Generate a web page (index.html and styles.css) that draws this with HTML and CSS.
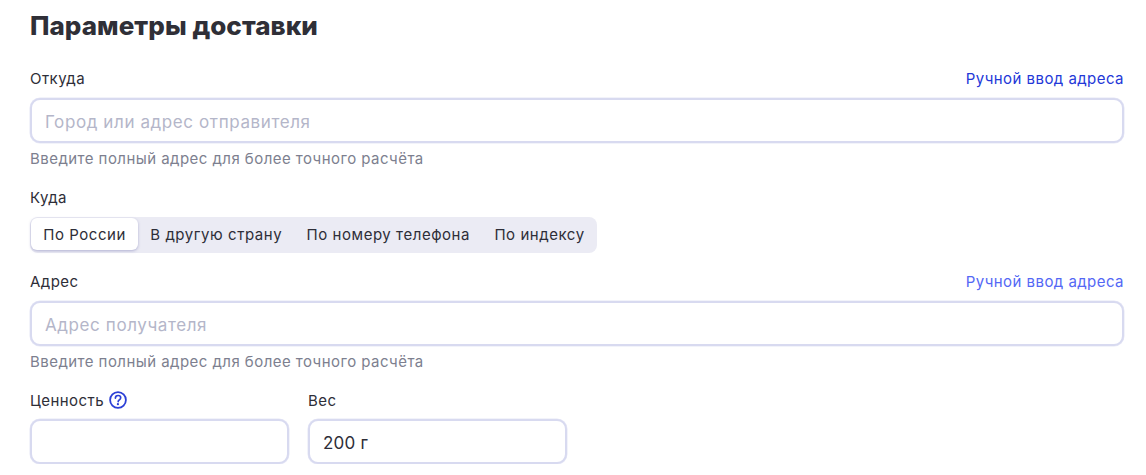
FILE: index.html
```html
<!DOCTYPE html>
<html lang="ru">
<head>
    <meta charset="UTF-8">
    <meta name="viewport" content="width=device-width, initial-scale=1.0">
    <title>Параметры доставки</title>
    <link rel="stylesheet" href="styles.css">
</head>
<body>
    <form class="delivery-form">
        <h1 class="form-title">Параметры доставки</h1>

        <div class="form-group from-group">
            <div class="label-row">
                <label class="form-label">Откуда</label>
                <a href="#" class="manual-link">Ручной ввод адреса</a>
            </div>
            <input type="text" class="form-input" placeholder="Город или адрес отправителя">
            <p class="form-hint">Введите полный адрес для более точного расчёта</p>
        </div>

        <div class="form-group to-group">
            <div class="label-row">
                <label class="form-label">Куда</label>
            </div>
            <div class="tabs">
                <button type="button" class="tab active">По России</button>
                <button type="button" class="tab">В другую страну</button>
                <button type="button" class="tab">По номеру телефона</button>
                <button type="button" class="tab">По индексу</button>
            </div>
        </div>

        <div class="form-group address-group">
            <div class="label-row">
                <label class="form-label">Адрес</label>
                <a href="#" class="manual-link light">Ручной ввод адреса</a>
            </div>
            <input type="text" class="form-input" placeholder="Адрес получателя">
            <p class="form-hint">Введите полный адрес для более точного расчёта</p>
        </div>

        <div class="short-fields">
            <div class="short-field">
                <div class="label-row">
                    <label class="form-label">Ценность
                        <svg class="help-icon" viewBox="0 0 18 18" width="18" height="18" fill="none">
                            <circle cx="9" cy="9" r="7.9" stroke="#2b3fd6" stroke-width="1.8"/>
                            <path d="M6.4 7.1c0-1.6 1.1-2.6 2.7-2.6s2.6 1 2.6 2.3c0 1-.5 1.6-1.4 2.1-.7.5-1.1.9-1.1 1.7" stroke="#2b3fd6" stroke-width="1.7" stroke-linecap="round"/>
                            <circle cx="8.9" cy="13.2" r="1.1" fill="#2b3fd6"/>
                        </svg>
                    </label>
                </div>
                <input type="text" class="form-input">
            </div>
            <div class="short-field">
                <div class="label-row">
                    <label class="form-label">Вес</label>
                </div>
                <input type="text" class="form-input" value="200 г">
            </div>
        </div>
    </form>
</body>
</html>
```

FILE: styles.css
```css
* {
    margin: 0;
    padding: 0;
    box-sizing: border-box;
}

body {
    font-family: Inter, "Noto Sans", Arial, sans-serif;
    background: #fff;
    color: #2e2e38;
    overflow: hidden;
}

.delivery-form {
    width: 1146px;
    padding: 9px 22px 0 30px;
}

.form-title {
    font-size: 26px;
    line-height: 34px;
    font-weight: 800;
    letter-spacing: 0.05px;
    color: #2f2f37;
}

.form-group {
    margin-top: 25px;
}

.to-group {
    margin-top: 20px;
}

.address-group {
    margin-top: 18px;
}

.label-row {
    display: flex;
    justify-content: space-between;
    align-items: center;
    height: 20px;
    margin-bottom: 10px;
}

.form-label {
    display: flex;
    align-items: center;
    gap: 5px;
    font-size: 15px;
    letter-spacing: 0.45px;
    color: #2e2e38;
}

.manual-link {
    font-size: 15px;
    letter-spacing: 0.45px;
    color: #2338d8;
    text-decoration: none;
}

.manual-link.light {
    color: #5468f5;
}

.form-input {
    display: block;
    width: 100%;
    height: 45px;
    padding: 2px 13px 0;
    border: 2px solid #d8daf0;
    border-radius: 10px;
    box-shadow: 0 0 0 0.5px #e6e7f6;
    background: #fff;
    font-family: inherit;
    font-size: 17px;
    letter-spacing: 0.2px;
    color: #2e2e38;
    outline: none;
}

.form-input::placeholder {
    color: #b4b6c9;
    opacity: 1;
    letter-spacing: 0.6px;
}

.form-hint {
    margin-top: 7px;
    font-size: 15px;
    line-height: 17px;
    letter-spacing: 0.45px;
    color: #7d7f8f;
}

.tabs {
    display: inline-flex;
    height: 36px;
    padding: 1px 0 3px 1px;
    border-radius: 8px;
    background: #ebebf4;
}

.tab {
    padding: 0 12.2px;
    border: none;
    border-radius: 6px;
    background: transparent;
    font-family: inherit;
    font-size: 15px;
    letter-spacing: 0.55px;
    color: #2e2e38;
}

.tab.active {
    background: #fff;
    box-shadow: 0 1px 3px rgba(90, 90, 160, 0.4);
}

.short-fields {
    display: flex;
    gap: 19px;
    margin-top: 20px;
}

.short-field {
    width: 259px;
}

.short-field .label-row {
    margin-bottom: 9px;
}
```
